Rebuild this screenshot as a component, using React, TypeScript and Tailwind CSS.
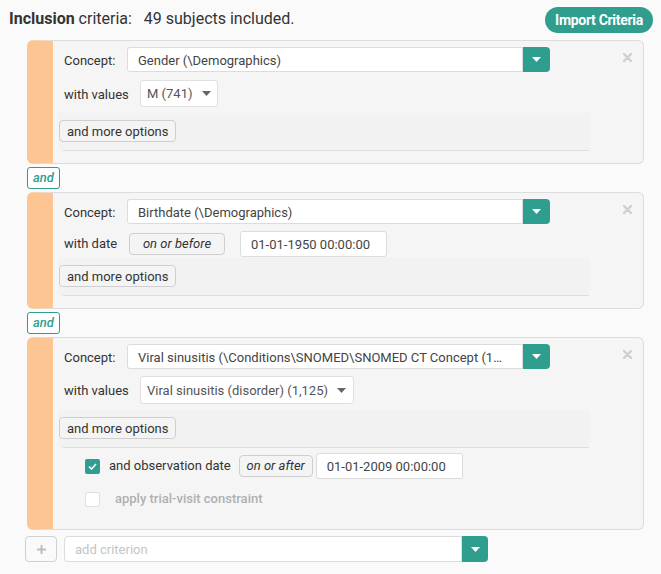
import React from "react";

const TEAL = "bg-[#2f9e8f]";

function Caret({ color = "white" }: { color?: string }) {
  return (
    <svg width="9" height="5" viewBox="0 0 9 5">
      <path d="M0 0 L9 0 L4.5 5 Z" fill={color} />
    </svg>
  );
}

function ConceptSelect({ text }: { text: string }) {
  return (
    <div className="flex h-[25px]">
      <div className="w-[396px] h-full bg-white border border-[#dcdcdc] rounded-l-[3px] flex items-center pl-[10px] pt-[3px] text-[13px] text-[#444] overflow-hidden whitespace-nowrap">
        {text}
      </div>
      <div className={`w-[27px] h-full ${TEAL} rounded-r-[4px] flex items-center justify-center`}>
        <Caret />
      </div>
    </div>
  );
}

function Close() {
  return (
    <svg className="absolute top-[12px] right-[11px]" width="9" height="9" viewBox="0 0 9 9">
      <path d="M1 1 L8 8 M8 1 L1 8" stroke="#cfcfcf" strokeWidth="2.4" strokeLinecap="round" />
    </svg>
  );
}

function MoreOptions() {
  return (
    <div className="flex flex-col ml-[-5px] w-[530px] bg-[#f2f2f2] pt-[7px]">
      <div className="flex w-fit h-[22px] items-center pt-[1px] px-[7px] border border-[#cfcfcf] rounded-[4px] bg-[#f4f4f4] text-[13px] leading-[16px] text-[#333]">
        and more options
      </div>
      <div className="mt-[8px] ml-[4px] h-px bg-[#dedede]" />
    </div>
  );
}

function Card({ children, className = "" }: { children: React.ReactNode; className?: string }) {
  return (
    <div className={`relative flex w-[617px] bg-[#f5f5f5] border border-[#dcdcdc] border-l-[26px] border-l-[#fcc591] rounded-[6px] ${className}`}>
      <div className="flex flex-col flex-1 pl-[11px] pt-[6px]">{children}</div>
      <Close />
    </div>
  );
}

function AndBadge() {
  return (
    <div className="w-[33px] h-[22px] my-[3px] border border-[#2f9e8f] rounded-[3px] bg-white flex items-center justify-center text-[13px] leading-[16px] italic font-medium text-[#2f9e8f]">
      and
    </div>
  );
}

function Label({ children, w, pt = "" }: { children: React.ReactNode; w: string; pt?: string }) {
  return <div className={`${w} ${pt} text-[13px] leading-[16px] text-[#333]`}>{children}</div>;
}

export default function App() {
  return (
    <div
      className="w-[661px] h-[574px] bg-[#fafafa] overflow-hidden"
      style={{ fontFamily: "Roboto, 'Liberation Sans', sans-serif" }}
    >
      <div className="flex justify-between items-start h-[33px] pl-[9px] pr-[8px] pt-[7px]">
        <div className="text-[16px] leading-[26px] -mt-[1px] text-[#333]">
          <span className="font-bold">Inclusion</span> criteria:&nbsp;&nbsp; 49 subjects included.
        </div>
        <div className={`h-[26px] w-[108px] rounded-full ${TEAL} text-white text-[14px] font-bold flex items-center justify-center tracking-[-0.3px]`}>
          Import Criteria
        </div>
      </div>

      <div className="pl-[27px] mt-[7px] flex flex-col">
        {/* Card 1 */}
        <Card className="pb-[12px]">
          <div className="flex items-center h-[25px]">
            <Label w="w-[63px]" pt="pt-[3px]">Concept:</Label>
            <ConceptSelect text="Gender (\Demographics)" />
          </div>
          <div className="flex items-center mt-[8px] h-[27px]">
            <Label w="w-[76px]" pt="pt-[2px]">with values</Label>
            <div className="w-[78px] h-[27px] bg-white border border-[#e0e0e0] rounded-[3px] flex items-center justify-between pl-[6px] pr-[6px] text-[13px] text-[#555]">
              <span className="pt-[1px]">M (741)</span>
              <Caret color="#666" />
            </div>
          </div>
          <div className="mt-[6px]">
            <MoreOptions />
          </div>
        </Card>

        <AndBadge />

        {/* Card 2 */}
        <Card className="pb-[12px]">
          <div className="flex items-center h-[25px]">
            <Label w="w-[63px]" pt="pt-[3px]">Concept:</Label>
            <ConceptSelect text="Birthdate (\Demographics)" />
          </div>
          <div className="flex items-center mt-[7px] h-[26px]">
            <Label w="w-[65px]">with date</Label>
            <div className="w-[96px] h-[22px] border border-[#cfcfcf] rounded-[4px] bg-[#f4f4f4] flex items-center justify-center text-[13px] italic text-[#333]">
              on or before
            </div>
            <div className="ml-[15px] w-[147px] h-[26px] bg-white border border-[#dcdcdc] rounded-[3px] flex items-center pl-[10px] pt-[1px] text-[13px] text-[#444]">
              01-01-1950 00:00:00
            </div>
          </div>
          <div className="mt-[1px]">
            <MoreOptions />
          </div>
        </Card>

        <AndBadge />

        {/* Card 3 */}
        <Card className="pb-[20px]">
          <div className="flex items-center h-[25px]">
            <Label w="w-[63px]" pt="pt-[3px]">Concept:</Label>
            <ConceptSelect text="Viral sinusitis (\Conditions\SNOMED\SNOMED CT Concept (1…" />
          </div>
          <div className="flex items-center mt-[7px] h-[28px]">
            <Label w="w-[76px]" pt="pt-[2px]">with values</Label>
            <div className="w-[214px] h-[28px] bg-white border border-[#e0e0e0] rounded-[3px] flex items-center justify-between pl-[6px] pr-[7px] text-[13px] text-[#555]">
              <span className="pt-[1px]">Viral sinusitis (disorder) (1,125)</span>
              <Caret color="#666" />
            </div>
          </div>
          <div className="mt-[6px]">
            <MoreOptions />
          </div>
          <div className="flex items-center mt-[5px] h-[26px] pl-[21px]">
            <div className={`w-[15px] h-[15px] rounded-[2px] ${TEAL} flex items-center justify-center`}>
              <svg width="9" height="7" viewBox="0 0 9 7">
                <path d="M1 3.5 L3.5 6 L8 1" stroke="white" strokeWidth="1.6" fill="none" />
              </svg>
            </div>
            <div className="ml-[9px] text-[13px] text-[#333]">and observation date</div>
            <div className="ml-[8px] w-[74px] h-[22px] border border-[#cfcfcf] rounded-[4px] bg-[#f4f4f4] flex items-center justify-center text-[13px] italic text-[#333]">
              on or after
            </div>
            <div className="ml-[3px] w-[147px] h-[26px] bg-white border border-[#dcdcdc] rounded-[3px] flex items-center pl-[10px] pt-[1px] text-[13px] text-[#444]">
              01-01-2009 00:00:00
            </div>
          </div>
          <div className="flex items-center mt-[10px] h-[20px] pl-[21px]">
            <div className="w-[15px] h-[15px] rounded-[2px] bg-white border border-[#e0e0e0]" />
            <div className="ml-[15px] text-[13px] font-medium text-[#b0b0b0]">apply trial-visit constraint</div>
          </div>
        </Card>
      </div>

      {/* add criterion row */}
      <div className="flex items-center mt-[6px] pl-[25px]">
        <div className="w-[32px] h-[26px] border border-[#d0d0d0] rounded-[4px] bg-[#fafafa] flex items-center justify-center">
          <svg width="11" height="11" viewBox="0 0 11 11">
            <path d="M5.5 1 V10 M1 5.5 H10" stroke="#bdbdbd" strokeWidth="2" />
          </svg>
        </div>
        <div className="ml-[7px] flex h-[26px]">
          <div className="w-[398px] h-full bg-white border border-[#dcdcdc] rounded-l-[4px] flex items-center pl-[10px] pt-[1px] text-[13px] text-[#c4c4c4]">
            add criterion
          </div>
          <div className={`w-[26px] h-full ${TEAL} rounded-r-[4px] flex items-center justify-center`}>
            <Caret />
          </div>
        </div>
      </div>
    </div>
  );
}
